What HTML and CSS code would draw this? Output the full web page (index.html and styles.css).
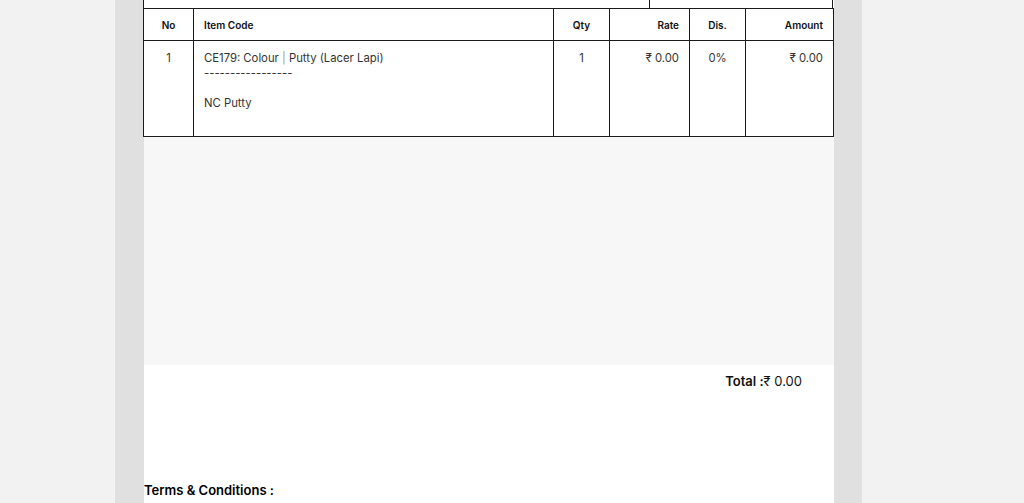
FILE: index.html
```html
<!DOCTYPE html>
<html>
<head>
<meta charset="utf-8">
<link rel="stylesheet" href="styles.css">
</head>
<body>
<div class="frame">
  <div class="page">
    <div class="prev-row">
      <div class="prev-left"></div>
      <div class="prev-right"></div>
    </div>
    <table class="items">
      <colgroup>
        <col class="c-no"><col class="c-item"><col class="c-qty"><col class="c-rate"><col class="c-dis"><col class="c-amt">
      </colgroup>
      <thead>
        <tr>
          <th class="center">No</th>
          <th class="left">Item Code</th>
          <th class="center">Qty</th>
          <th class="right">Rate</th>
          <th class="center">Dis.</th>
          <th class="right">Amount</th>
        </tr>
      </thead>
      <tbody>
        <tr>
          <td class="center">1</td>
          <td class="left">CE179: Colour <span class="bar">|</span> Putty (Lacer Lapi)<br>-----------------<br><br>NC Putty</td>
          <td class="center">1</td>
          <td class="right">₹ 0.00</td>
          <td class="center">0%</td>
          <td class="right">₹ 0.00</td>
        </tr>
      </tbody>
    </table>
    <div class="filler"></div>
    <div class="total"><span class="total-label">Total :</span>₹ 0.00</div>
    <div class="terms">Terms &amp; Conditions :</div>
  </div>
</div>
</body>
</html>
```

FILE: styles.css
```css
html, body {
  margin: 0;
  padding: 0;
}
body {
  background: #f2f2f2;
  font-family: Inter, "Liberation Sans", "DejaVu Sans", sans-serif;
  color: #1a1a1a;
  height: 503px;
  overflow: hidden;
}
.frame {
  width: 690px;
  margin-left: 115px;
  padding: 0 28px 0 29px;
  background: #e0e0e0;
  min-height: 503px;
}
.page {
  background: #fff;
  min-height: 503px;
}
.prev-row {
  display: flex;
  width: 688px;
  height: 8px;
  margin-left: -1px;
  border-left: 1px solid #1a1a1a;
  border-right: 1px solid #1a1a1a;
}
.prev-left {
  width: 505px;
  border-right: 1px solid #1a1a1a;
}
.prev-right {
  flex: 1;
}
.items {
  width: 690px;
  margin-left: -1px;
  border-collapse: collapse;
  table-layout: fixed;
}
.c-no { width: 50px; }
.c-item { width: 360px; }
.c-qty { width: 56px; }
.c-rate { width: 80px; }
.c-dis { width: 56px; }
.c-amt { width: 88px; }
.items th, .items td {
  border: 1px solid #1a1a1a;
  padding: 0 10px;
}
.items th {
  height: 31px;
  font-size: 10px;
  font-weight: 600;
  color: #111;
}
.items td {
  font-size: 11.3px;
  line-height: 15px;
  color: #333;
  vertical-align: top;
  padding-top: 10px;
  padding-bottom: 25px;
}
.center { text-align: center; }
.left { text-align: left; }
.right { text-align: right; }
.bar {
  color: #999;
}
.filler {
  height: 228px;
  background: #f7f7f7;
}
.total {
  text-align: right;
  padding: 7px 32px 0 0;
  font-size: 13px;
  line-height: 18px;
  color: #111;
}
.total-label {
  font-weight: 600;
}
.terms {
  margin-top: 91px;
  font-size: 13px;
  font-weight: 600;
  line-height: 18px;
  color: #000;
}
```
